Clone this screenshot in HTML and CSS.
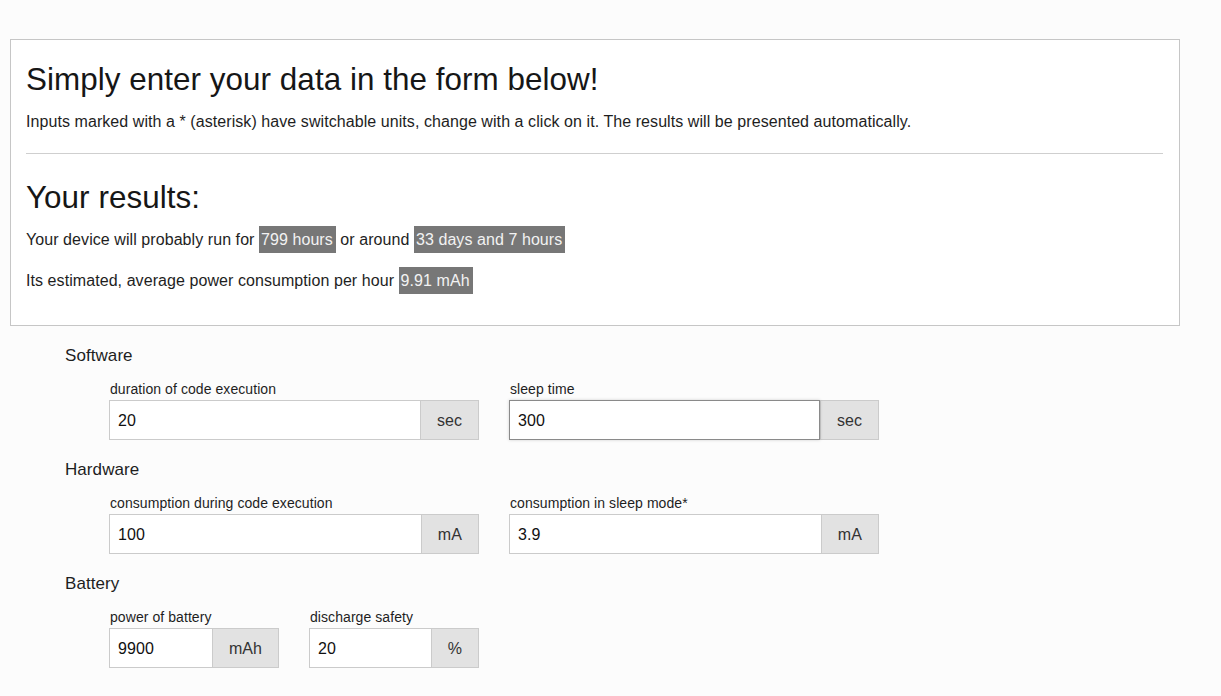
FILE: index.html
```html
<!DOCTYPE html>
<html lang="en">
<head>
<meta charset="utf-8">
<title>Battery runtime calculator</title>
<link rel="stylesheet" href="styles.css">
</head>
<body>
<div class="panel">
  <h1 class="title">Simply enter your data in the form below!</h1>
  <p class="intro">Inputs marked with a * (asterisk) have switchable units, change with a click on it. The results will be presented automatically.</p>
  <hr class="rule">
  <h2 class="title results-title">Your results:</h2>
  <p class="result">Your device will probably run for <span class="badge">799 hours</span> or around <span class="badge">33 days and 7 hours</span></p>
  <p class="result second">Its estimated, average power consumption per hour <span class="badge">9.91 mAh</span></p>
</div>

<form class="form">
  <section class="group">
    <h3 class="group-title">Software</h3>
    <div class="fields">
      <div class="field wide">
        <label class="label">duration of code execution</label>
        <div class="input-group"><input class="input" type="text" value="20"><span class="addon">sec</span></div>
      </div>
      <div class="field wide">
        <label class="label">sleep time</label>
        <div class="input-group"><input class="input focused" type="text" value="300"><span class="addon">sec</span></div>
      </div>
    </div>
  </section>
  <section class="group">
    <h3 class="group-title">Hardware</h3>
    <div class="fields">
      <div class="field wide">
        <label class="label">consumption during code execution</label>
        <div class="input-group"><input class="input" type="text" value="100"><span class="addon">mA</span></div>
      </div>
      <div class="field wide">
        <label class="label">consumption in sleep mode*</label>
        <div class="input-group"><input class="input" type="text" value="3.9"><span class="addon">mA</span></div>
      </div>
    </div>
  </section>
  <section class="group">
    <h3 class="group-title">Battery</h3>
    <div class="fields">
      <div class="field narrow">
        <label class="label">power of battery</label>
        <div class="input-group"><input class="input" type="text" value="9900"><span class="addon">mAh</span></div>
      </div>
      <div class="field narrow">
        <label class="label">discharge safety</label>
        <div class="input-group"><input class="input" type="text" value="20"><span class="addon">%</span></div>
      </div>
    </div>
  </section>
</form>
</body>
</html>
```

FILE: styles.css
```css
html, body {
  margin: 0;
  padding: 0;
}
body {
  background: #fcfcfc;
  font-family: "Liberation Sans", Arial, Helvetica, sans-serif;
  color: #1e1e1e;
  font-size: 16px;
  letter-spacing: 0.07px;
}
.panel {
  margin: 39px 0 0 10px;
  width: 1170px;
  box-sizing: border-box;
  border: 1px solid #c6c6c6;
  background: #fff;
  padding: 0 16px 31px 15px;
}
.title {
  font-weight: normal;
  font-size: 31.4px;
  letter-spacing: 0.05px;
  line-height: 36px;
  margin: 22px 0 0;
  color: #161616;
}
.intro {
  margin: 14px 0 0;
  line-height: 20px;
}
.rule {
  margin: 21px 0 0;
  border: 0;
  border-top: 1px solid #cfcfcf;
  height: 0;
}
.results-title {
  margin-top: 26px;
}
.result {
  margin: 10px 0 0;
  line-height: 27px;
}
.result.second {
  margin-top: 14px;
}
.badge {
  display: inline-block;
  background: #777;
  color: #f2f2f2;
  padding: 0 3px 0 2px;
  line-height: 27px;
}
.form {
  padding: 19px 0 0 65px;
}
.group {
  margin-bottom: 19px;
}
.group-title {
  font-weight: normal;
  font-size: 17px;
  line-height: 20px;
  margin: 0 0 14px;
  padding-top: 1px;
}
.fields {
  display: flex;
  gap: 30px;
  padding-left: 44px;
}
.field {
  display: flex;
  flex-direction: column;
  gap: 3px;
}
.field.wide { width: 370px; }
.field.narrow { width: 170px; }
.label {
  font-size: 14px;
  line-height: 16px;
  padding: 1px 0 0 1px;
}
.input-group {
  display: flex;
  height: 40px;
}
.input {
  flex: 1;
  min-width: 0;
  box-sizing: border-box;
  height: 40px;
  border: 1px solid #cbcbcb;
  border-right: 0;
  background: #fff;
  font-family: inherit;
  font-size: 16px;
  letter-spacing: 0.07px;
  color: #111;
  padding: 2px 8px 0;
  margin: 0;
  outline: none;
}
.input.focused {
  border: 1px solid #8a8a8a;
  box-shadow: 0 0 3px rgba(0, 0, 0, 0.18);
  position: relative;
  z-index: 1;
}
.addon {
  box-sizing: border-box;
  height: 40px;
  line-height: 40px;
  border: 1px solid #cbcbcb;
  background: #e2e2e2;
  color: #333;
  padding: 0 16px;
  font-size: 16px;
}
```
